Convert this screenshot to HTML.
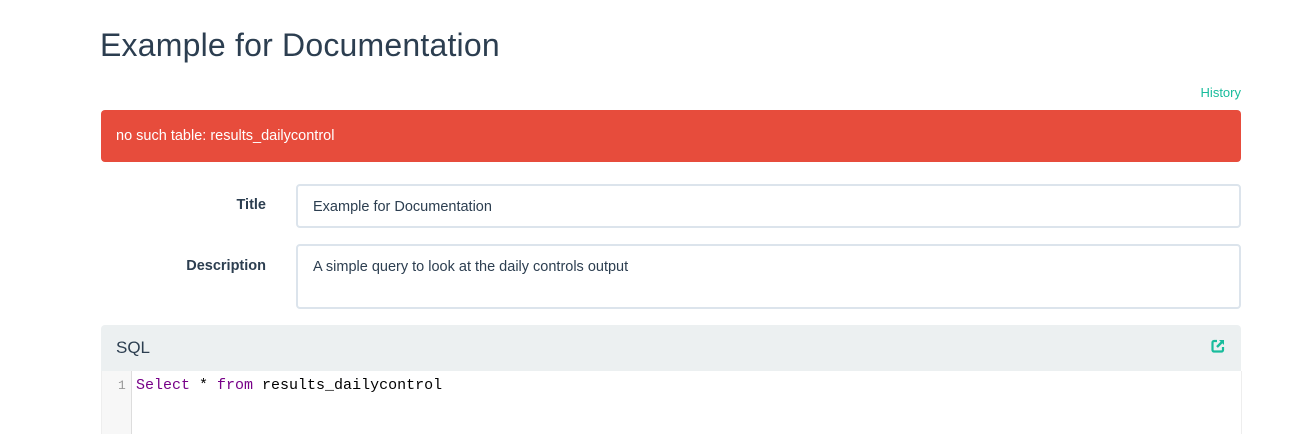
<!DOCTYPE html>
<html><head><style>
body{margin:0;background:#fff;font-family:"Liberation Sans",sans-serif;color:#2c3e50;width:1309px;height:434px;overflow:hidden;position:relative}
.a{position:absolute}
</style></head><body>
<div class="a" style="left:100px;top:27px;font-size:32px;color:#2c3e50;letter-spacing:0.2px">Example for Documentation</div>
<div class="a" style="right:68px;top:85px;font-size:13px;color:#18bc9c">History</div>
<div class="a" style="left:101px;top:110px;width:1140px;height:52px;background:#e74c3c;border-radius:4px"></div>
<div class="a" style="left:116px;top:128px;font-size:14.5px;color:#fff">no such table: results_dailycontrol</div>
<div class="a" style="left:150px;width:116px;text-align:right;top:197px;font-size:14.5px;font-weight:bold">Title</div>
<div class="a" style="left:296px;top:184px;width:941px;height:40px;border:2px solid #dce4ec;border-radius:4px"></div>
<div class="a" style="left:313px;top:199px;font-size:14.5px">Example for Documentation</div>
<div class="a" style="left:150px;width:116px;text-align:right;top:258px;font-size:14.5px;font-weight:bold">Description</div>
<div class="a" style="left:296px;top:244px;width:941px;height:61px;border:2px solid #dce4ec;border-radius:4px"></div>
<div class="a" style="left:313px;top:259px;font-size:14.5px">A simple query to look at the daily controls output</div>
<div class="a" style="left:101px;top:325px;width:1140px;height:46px;background:#ecf0f1;border-radius:4px 4px 0 0"></div>
<div class="a" style="left:116px;top:338px;font-size:17px">SQL</div>
<svg class="a" style="left:1211px;top:339px" width="14" height="14" viewBox="0 0 14 14"><path d="M6 2H3a1.5 1.5 0 0 0-1.5 1.5v7.5A1.5 1.5 0 0 0 3 12.5h7.5A1.5 1.5 0 0 0 12 11V8" fill="none" stroke="#18bc9c" stroke-width="2.2"/><path d="M8 1h5v5z" fill="#18bc9c"/><path d="M12 2L6 8" stroke="#18bc9c" stroke-width="2.4"/></svg>
<div class="a" style="left:101px;top:371px;width:1139px;height:63px;border-left:1px solid #eee;border-right:1px solid #eee"></div>
<div class="a" style="left:102px;top:371px;width:29px;height:63px;background:#f7f7f7;border-right:1px solid #ddd"></div>
<div class="a" style="left:118px;top:378px;font-family:'Liberation Mono',monospace;font-size:13px;color:#999">1</div>
<div class="a" style="left:136px;top:377px;font-family:'Liberation Mono',monospace;font-size:15px;color:#000;white-space:pre"><span style="color:#708">Select</span> * <span style="color:#708">from</span> results_dailycontrol</div>
</body></html>
